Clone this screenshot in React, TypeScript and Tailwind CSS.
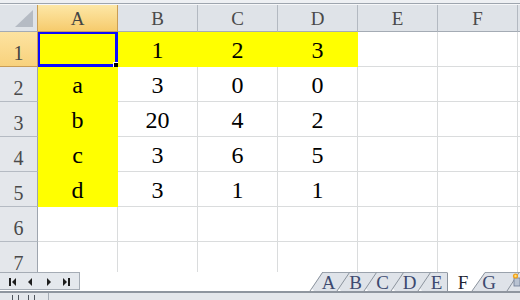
import React from "react";

const COLS = ["A", "B", "C", "D", "E", "F", "G"];

const DATA: string[][] = [
  ["", "1", "2", "3", "", "", ""],
  ["a", "3", "0", "0", "", "", ""],
  ["b", "20", "4", "2", "", "", ""],
  ["c", "3", "6", "5", "", "", ""],
  ["d", "3", "1", "1", "", "", ""],
  ["", "", "", "", "", "", ""],
  ["", "", "", "", "", "", ""],
];

// filled cells hide their own gridlines
const isYellow = (r: number, c: number) => (r === 0 && c <= 3) || (c === 0 && r <= 4);

function NavButtons() {
  return (
    <svg width="80" height="18" viewBox="0 0 80 18" className="block">
      <g fill="#1e1e1e">
        <rect x="9" y="5" width="2" height="8" />
        <polygon points="16,5 16,13 12,9" />
        <polygon points="32,5 32,13 28,9" />
        <polygon points="47,5 47,13 51,9" />
        <polygon points="63,5 63,13 67,9" />
        <rect x="68" y="5" width="2" height="8" />
      </g>
    </svg>
  );
}

function TabShapes() {
  const slants = [5, 32, 59, 86, 113];
  return (
    <svg width="215" height="19" viewBox="0 0 215 19" className="absolute inset-0">
      <polygon points="5,19 17,0 142,0 142,19" fill="#dfe3e9" />
      <polygon points="167,19 180,0 215,0 215,19" fill="#dfe3e9" />
      <line x1="17" y1="0.5" x2="142" y2="0.5" stroke="#9aa2ac" />
      <line x1="180" y1="0.5" x2="215" y2="0.5" stroke="#9aa2ac" />
      {slants.map((b) => (
        <g key={b}>
          <polygon points={`${b},19 ${b + 4},19 ${b + 1.5},16`} fill="#ffffff" />
          <line x1={b} y1="19" x2={b + 12.5} y2="0.5" stroke="#8b939d" />
        </g>
      ))}
      <line x1="142.5" y1="0.5" x2="142.5" y2="19" stroke="#8b939d" />
      <line x1="167" y1="19" x2="180" y2="0.5" stroke="#8b939d" />
      <line x1="202" y1="19" x2="214" y2="0.5" stroke="#8b939d" />
      {/* new sheet icon */}
      <rect x="209" y="6" width="6" height="8" fill="#b9c3d2" stroke="#6d7b93" strokeWidth="0.8" />
      <circle cx="210.5" cy="4" r="2.6" fill="#f2a21a" />
      <circle cx="210.5" cy="4" r="1.2" fill="#ffe07a" />
    </svg>
  );
}

export default function App() {
  return (
    <div className="w-[520px] h-[300px] overflow-hidden bg-white flex flex-col select-none [font-family:'Liberation_Serif',serif]">
      {/* window edge above the headers */}
      <div className="h-[3px] shrink-0 bg-[#eef0f3]" />
      <div className="h-px shrink-0 bg-[#9ea5ae]" />
      <div className="h-px shrink-0 bg-[#f6f7f9]" />

      {/* sheet grid */}
      <div className="h-[267px] shrink-0 overflow-hidden">
        <div className="flex h-[27px]">
          <div className="relative w-[38px] shrink-0 bg-[#dfe3e8] border-r border-b border-r-[#c99d55] border-b-[#a4abb4]">
            <svg width="37" height="26" className="absolute inset-0">
              <polygon points="33,5 33,22 15,22" fill="#b5bbc4" />
            </svg>
          </div>
          {COLS.map((c, i) => (
            <div
              key={c}
              className={
                i === 0
                  ? "w-[80px] shrink-0 flex items-end justify-center pb-[3px] bg-gradient-to-b from-[#fde7a6] to-[#f6cb6c] border-r border-b border-[#c99d55] text-[19px] leading-none text-[#444444]"
                  : "w-[80px] shrink-0 flex items-end justify-center pb-[3px] bg-[#dfe3e8] border-r border-b border-r-[#b3b9c1] border-b-[#a4abb4] text-[19px] leading-none text-[#4a4a4a]"
              }
            >
              {c}
            </div>
          ))}
        </div>

        {DATA.map((row, r) => (
          <div key={r} className="flex h-[35px]">
            <div
              className={
                r === 0
                  ? "w-[38px] shrink-0 flex items-end justify-center pb-[3px] bg-gradient-to-b from-[#fde3a0] to-[#f8d27c] border-r border-b border-[#c99d55] text-[20px] leading-none text-[#444444]"
                  : "w-[38px] shrink-0 flex items-end justify-center pb-[3px] bg-[#e4e7eb] border-r border-b border-r-[#9ea5ae] border-b-[#b5bbc3] text-[20px] leading-none text-[#4a4a4a]"
              }
            >
              {r + 1}
            </div>
            {row.map((v, c) => (
              <div
                key={c}
                className={
                  (isYellow(r, c)
                    ? "bg-[#ffff00] border-[#ffff00] "
                    : "bg-white border-[#dadcdd] ") +
                  "relative w-[80px] shrink-0 flex items-end justify-center pb-[4px] border-r border-b text-[24px] leading-none text-black"
                }
              >
                {v}
                {r === 0 && c === 0 && (
                  <div className="absolute left-0 top-0 right-[-1px] bottom-[-1px] border-l-2 border-t-2 border-r-[3px] border-b-[3px] border-[#0a0aff]">
                    <div className="absolute right-[-4px] bottom-[-4px] w-[6px] h-[6px] bg-black border border-white" />
                  </div>
                )}
              </div>
            ))}
          </div>
        ))}
      </div>

      {/* sheet tabs */}
      <div className="flex h-[19px] shrink-0">
        <div className="w-[80px] h-[18px] shrink-0 bg-[#e4e8ed] border-t border-r border-b border-[#a5acb5]">
          <NavButtons />
        </div>
        <div className="flex-1" />
        <div className="relative w-[215px] shrink-0">
          <TabShapes />
          <div className="relative flex pl-[10px] pt-px text-[19px] leading-none text-[#3d4a70]">
            {["A", "B", "C", "D", "E"].map((t) => (
              <span key={t} className="w-[27px] text-center">
                {t}
              </span>
            ))}
            <span className="w-[26px] text-center text-[#1f2533]">F</span>
            <span className="w-[26px] text-center">G</span>
          </div>
        </div>
      </div>
      <div className="h-[2px] shrink-0 bg-[#8f969f]" />

      {/* scroll strip */}
      <div className="flex-1 flex items-end bg-[#e4e7eb]">
        <div className="flex items-end gap-[5px] pl-[12px] w-[49px] h-full border-r border-[#a5acb5]">
          <span className="w-px h-[5px] bg-[#50565e]" />
          <span className="w-px h-[5px] bg-[#50565e]" />
          <span className="w-px h-[5px] bg-[#50565e] ml-[4px]" />
          <span className="w-px h-[5px] bg-[#50565e]" />
        </div>
      </div>
    </div>
  );
}
